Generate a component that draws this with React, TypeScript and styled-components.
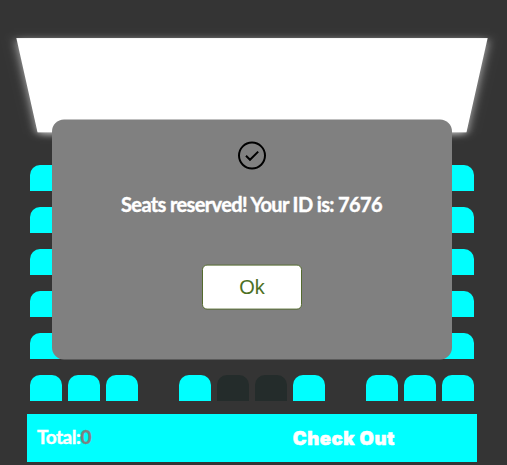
import React from "react";
import styled, { createGlobalStyle } from "styled-components";

const GlobalStyle = createGlobalStyle`
  * { box-sizing: border-box; }
  html, body { margin: 0; background: #343434; overflow: hidden; }
  body { font-family: Lato, "Liberation Sans", sans-serif; }
`;

const Page = styled.main`
  height: 465px;
  padding: 21px 30px 0 27px;
  overflow: hidden;
  background: #343434;
`;

const Screen = styled.div`
  height: 133px;
  background: #fff;
  transform: perspective(1000px) rotateX(-45deg) scaleX(0.998);
  box-shadow: 0 3px 10px rgba(255, 255, 255, 0.7);
`;

const Seats = styled.section`
  display: flex;
  flex-direction: column;
  gap: 16px;
  padding: 11px 3px 0;
`;

const Row = styled.div`
  display: flex;
  justify-content: space-between;
`;

const Block = styled.div`
  display: flex;
  gap: 6px;
`;

const Seat = styled.span<{ $taken?: boolean }>`
  width: 32px;
  height: 26px;
  border-radius: 10px 10px 0 0;
  background: ${(p) => (p.$taken ? "#242c2b" : "#00ffff")};
`;

const Footer = styled.footer`
  display: flex;
  align-items: center;
  height: 48px;
  margin-top: 13px;
  padding: 0 82px 0 10px;
  justify-content: space-between;
  background: #00ffff;
`;

const Total = styled.div`
  font-size: 19px;
  font-weight: 700;
  letter-spacing: -0.45px;
  line-height: 24px;
  color: #fff;
  padding-bottom: 3px;
  -webkit-text-stroke: 0.4px currentColor;
`;

const Amount = styled.span`
  color: #808080;
`;

const CheckOut = styled.button`
  border: 0;
  padding: 0;
  background: transparent;
  color: #fff;
  font: 900 18.5px/24px Inter, "Liberation Sans", sans-serif;
  letter-spacing: 0.6px;
  -webkit-text-stroke: 0.5px currentColor;
  white-space: nowrap;
`;

const Modal = styled.div`
  position: fixed;
  top: 120px;
  left: 52px;
  width: 400px;
  height: 240px;
  transform: translateY(-0.4px);
  display: flex;
  flex-direction: column;
  align-items: center;
  padding-top: 20px;
  border-radius: 12px;
  background: #808080;
`;

const Message = styled.h2`
  margin: 18px 0 0;
  font-size: 20px;
  font-weight: 700;
  line-height: 28px;
  letter-spacing: -0.63px;
  white-space: nowrap;
  color: #fff;
  padding-right: 1px;
  -webkit-text-stroke: 0.4px currentColor;
`;

const OkButton = styled.button`
  width: 100px;
  height: 45px;
  margin-top: 47px;
  padding: 0 0 2px;
  border: 1px solid #556b2f;
  border-radius: 5px;
  background: #fff;
  color: #4d7024;
  font: 20px/24px "Liberation Sans", sans-serif;
`;

const rows = [0, 1, 2, 3, 4, 5];
const blocks = [
  [1, 2, 3],
  [4, 5, 6, 7],
  [8, 9, 10],
];

export default function App() {
  return (
    <>
      <GlobalStyle />
      <Page>
        <Screen />
        <Seats>
          {rows.map((row) => (
            <Row key={row}>
              {blocks.map((block, i) => (
                <Block key={i}>
                  {block.map((seat) => (
                    <Seat key={seat} $taken={row === 5 && (seat === 5 || seat === 6)} />
                  ))}
                </Block>
              ))}
            </Row>
          ))}
        </Seats>
        <Footer>
          <Total>
            Total:<Amount>0</Amount>
          </Total>
          <CheckOut>Check Out</CheckOut>
        </Footer>
      </Page>
      <Modal role="dialog">
        <svg width="32" height="32" viewBox="0 0 32 32" fill="none" stroke="#000" strokeWidth="2">
          <circle cx="16" cy="16" r="13" />
          <path d="M10 16.2l4 4 8.2-8.2" />
        </svg>
        <Message>Seats reserved! Your ID is: 7676</Message>
        <OkButton>Ok</OkButton>
      </Modal>
    </>
  );
}
